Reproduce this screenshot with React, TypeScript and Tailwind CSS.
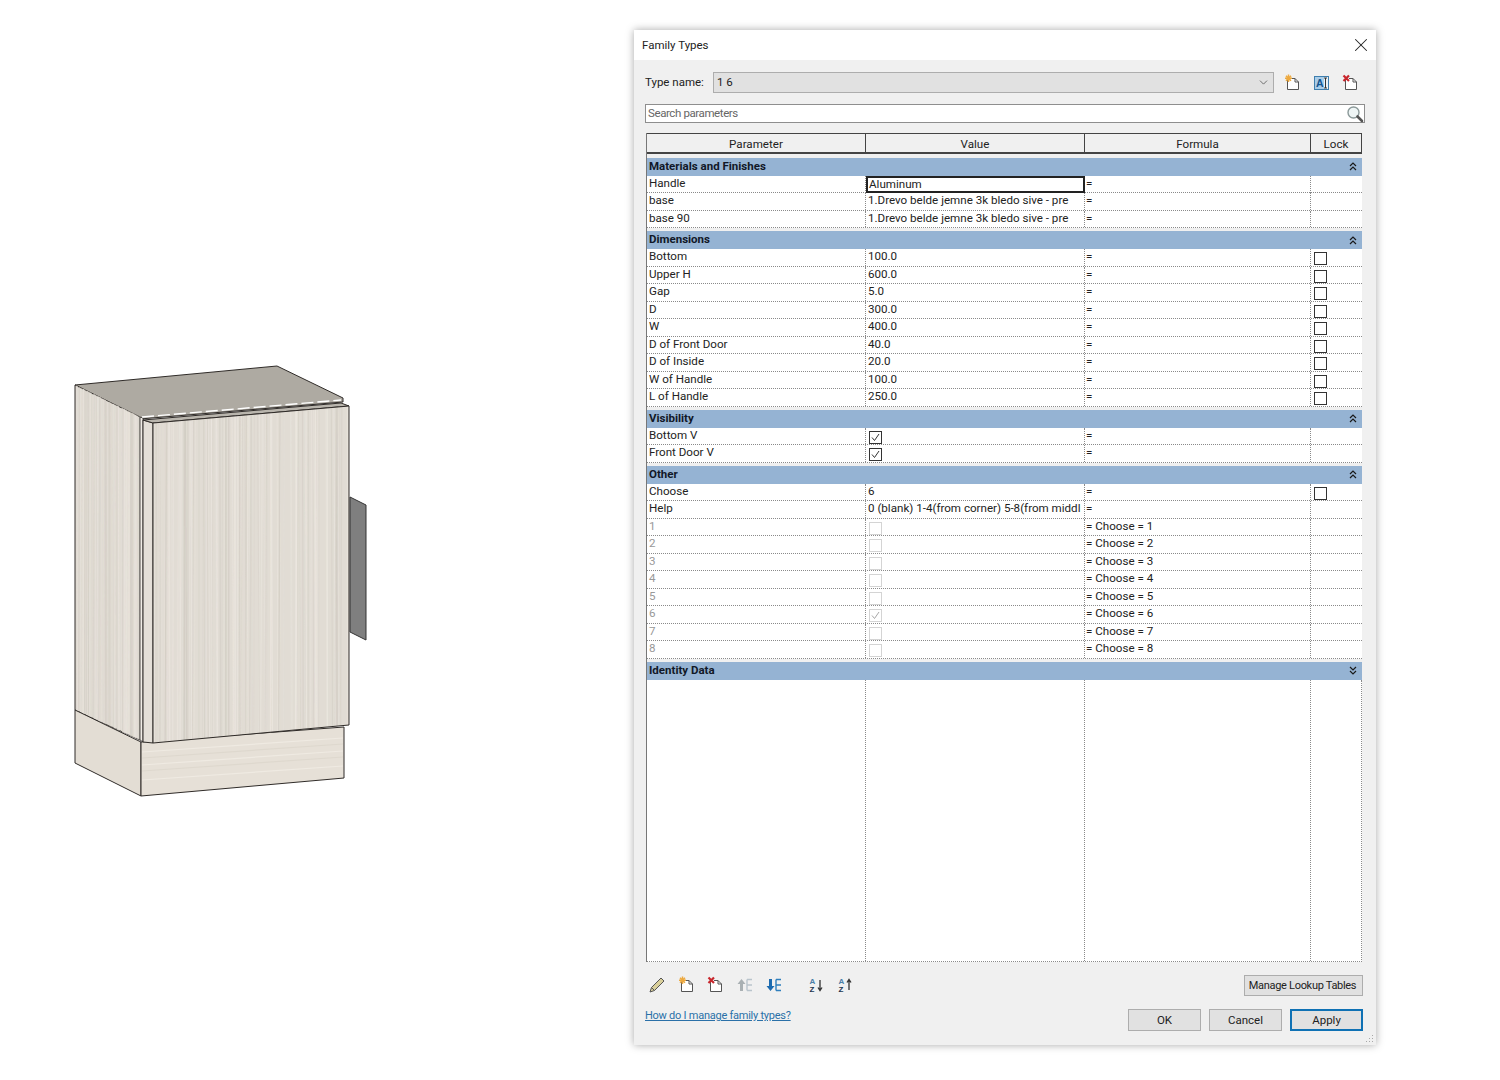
import { X, ChevronDown } from "lucide-react";

type Row = {
  name: string;
  value?: string;
  check?: boolean;
  formula?: string;
  lock?: boolean;
  disabled?: boolean;
  active?: boolean;
};

type Section = { title: string; open: boolean; rows: Row[] };

const sections: Section[] = [
  {
    title: "Materials and Finishes",
    open: true,
    rows: [
      { name: "Handle", value: "Aluminum", active: true },
      { name: "base", value: "1.Drevo belde jemne 3k bledo sive - pre" },
      { name: "base 90", value: "1.Drevo belde jemne 3k bledo sive - pre" },
    ],
  },
  {
    title: "Dimensions",
    open: true,
    rows: [
      { name: "Bottom", value: "100.0", lock: true },
      { name: "Upper H", value: "600.0", lock: true },
      { name: "Gap", value: "5.0", lock: true },
      { name: "D", value: "300.0", lock: true },
      { name: "W", value: "400.0", lock: true },
      { name: "D of Front Door", value: "40.0", lock: true },
      { name: "D of Inside", value: "20.0", lock: true },
      { name: "W of Handle", value: "100.0", lock: true },
      { name: "L of Handle", value: "250.0", lock: true },
    ],
  },
  {
    title: "Visibility",
    open: true,
    rows: [
      { name: "Bottom V", check: true },
      { name: "Front Door V", check: true },
    ],
  },
  {
    title: "Other",
    open: true,
    rows: [
      { name: "Choose", value: "6", lock: true },
      { name: "Help", value: "0 (blank) 1-4(from corner) 5-8(from middl" },
      ...[1, 2, 3, 4, 5, 6, 7, 8].map((n) => ({
        name: String(n),
        check: n === 6,
        formula: `Choose = ${n}`,
        disabled: true,
      })),
    ],
  },
  { title: "Identity Data", open: false, rows: [] },
];

// fixed pseudo random, so the wood grain stays the same every run
const rand = (n: number) => {
  const v = Math.sin(n * 12.9898) * 43758.5453;
  return v - Math.floor(v);
};

const grain = Array.from({ length: 150 }, (_, i) => ({
  id: i,
  x: 150 + rand(i + 1) * 203,
  side: 75 + rand(i + 300) * 66,
  w: 0.3 + rand(i + 600) * 1.1,
  light: rand(i + 900) > 0.4,
  drift: rand(i + 1200) * 4 - 2,
  opacity: 0.35 + rand(i + 1500) * 0.5,
}));

function Cabinet() {
  return (
    <svg viewBox="0 0 634 1080" className="h-[1080px] w-[634px]">
      <defs>
        <clipPath id="sideClip">
          <polygon points="75,385 140,417 140,740 75,710" />
        </clipPath>
        <clipPath id="doorClip">
          <polygon points="153,423 349,406 349,725 153,743" />
        </clipPath>
      </defs>
      {/* top */}
      <polygon points="75,385 277,366 343,398 343,402 140,419" fill="#aeaaa2" stroke="#2f2b28" strokeWidth="1" />
      {/* handle */}
      <polygon points="350,497 366,505 366,640 350,632" fill="#7f7f7f" stroke="#333" strokeWidth="1" />
      {/* side */}
      <polygon points="75,385 140,417 140,740 75,710" fill="#e0dbd3" stroke="#2f2b28" strokeWidth="1" />
      <g clipPath="url(#sideClip)">
        {grain.map((g) => (
          <line key={g.id} x1={g.side} x2={g.side + g.drift / 2} y1="380" y2="745" stroke={g.light ? "#e8e3dc" : "#d5d0c7"} strokeWidth={g.w} opacity={g.opacity} />
        ))}
      </g>
      {/* base */}
      <polygon points="75,710 141,742 141,796 75,763" fill="#e3ddd4" stroke="#2f2b28" strokeWidth="1" />
      <polygon points="141,742 344,727 344,778 141,796" fill="#e6e0d7" stroke="#2f2b28" strokeWidth="1" />
      {[752, 758, 765, 771, 780].map((y, i) => (
        <line key={y} x1="142" x2="343" y1={y} y2={y - 14} stroke={i % 2 ? "#ded8ce" : "#efeae2"} strokeWidth="1.2" />
      ))}
      {/* door edge and strips */}
      <polygon points="140,417 143,418 143,742 140,740" fill="#f0ece6" stroke="#2f2b28" strokeWidth="0.8" />
      <polygon points="143,420 153,423 153,743 143,742" fill="#e4dfd8" stroke="#2f2b28" strokeWidth="1" />
      <line x1="142" y1="417" x2="341" y2="400" stroke="#fff" strokeWidth="1.4" strokeDasharray="12 4" />
      <polygon points="143,420 341,403 349,406 153,423" fill="#b9b5ad" stroke="#2f2b28" strokeWidth="1" />
      {/* door front */}
      <polygon points="153,423 349,406 349,725 153,743" fill="#e1dcd4" />
      <g clipPath="url(#doorClip)">
        {grain.map((g) => (
          <line key={g.id} x1={g.x} x2={g.x + g.drift} y1="400" y2="745" stroke={g.light ? "#ebe6df" : "#d2cdc4"} strokeWidth={g.w} opacity={g.opacity} />
        ))}
      </g>
      <polygon points="153,423 349,406 349,725 153,743" fill="none" stroke="#2f2b28" strokeWidth="1" />
    </svg>
  );
}

function DocIcon({ mark }: { mark: "new" | "del" }) {
  return (
    <svg viewBox="0 0 16 17" className="h-[17px] w-4">
      <path d="M3.5 6V15.5H14.5V8L11 4.5H7" fill="#fff" stroke="#555" strokeWidth="1" />
      <path d="M11 4.5V8H14.5" fill="none" stroke="#555" strokeWidth="1" />
      {mark === "new" ? (
        <g stroke="#eda93f" strokeWidth="1.5">
          <path d="M4.5 0.5V8M1 4.2H8M2 1.7L7 6.7M7 1.7L2 6.7" />
        </g>
      ) : (
        <path d="M1.5 1.5L7 7M7 1.5L1.5 7" stroke="#c8272d" strokeWidth="2.2" />
      )}
    </svg>
  );
}

function RenameIcon() {
  return (
    <svg viewBox="0 0 15 14" className="h-[14px] w-[15px]">
      <rect x="0.5" y="0.5" width="14" height="13" fill="#a9cde9" stroke="#3f7fae" />
      <rect x="10" y="1" width="4" height="12" fill="#eaf2f8" />
      <text x="2" y="11" fontFamily="Liberation Sans, sans-serif" fontSize="10.5" fontWeight="700" fill="#12548f">A</text>
      <path d="M10 2H13M11.5 2V12M10 12H13" stroke="#333" strokeWidth="1" fill="none" />
    </svg>
  );
}

function SearchIcon() {
  return (
    <svg viewBox="0 0 18 18" className="h-[18px] w-[18px]">
      <circle cx="7.5" cy="7.5" r="5.5" fill="#eef5f5" stroke="#8b9999" strokeWidth="1.4" />
      <path d="M11.5 11.5L16 16" stroke="#555" strokeWidth="2.6" strokeLinecap="round" />
    </svg>
  );
}

function Pencil() {
  return (
    <svg viewBox="0 0 16 16" className="h-4 w-4">
      <path d="M1 15L2.5 10.5L12 1L15 4L5.5 13.5Z" fill="#d9cf9a" stroke="#555" strokeWidth="1" />
      <path d="M2.5 10.5L5.5 13.5" stroke="#555" strokeWidth="1" />
    </svg>
  );
}

function MoveIcon({ up, faded }: { up: boolean; faded?: boolean }) {
  const arrow = faded ? "#a9b0b3" : "#1c6bb0";
  const lines = faded ? "#b9c4cc" : "#2f7fbd";
  return (
    <svg viewBox="0 0 16 14" className="h-[14px] w-4">
      <path d={up ? "M4.5 1L8.5 6H6V13H3V6H0.5Z" : "M4.5 13L8.5 8H6V1H3V8H0.5Z"} fill={arrow} />
      <path d="M10 1.5H15M10 1.5V12.5M10 7H15M10 12.5H15" stroke={lines} strokeWidth="1.4" fill="none" />
    </svg>
  );
}

function SortIcon({ up }: { up: boolean }) {
  return (
    <svg viewBox="0 0 14 15" className="h-[15px] w-[14px]">
      <text x="0.5" y="6.5" fontFamily="Liberation Sans, sans-serif" fontSize="8" fontWeight="700" fill="#4a7ea8">A</text>
      <text x="0.5" y="14.5" fontFamily="Liberation Sans, sans-serif" fontSize="8" fontWeight="700" fill="#1c3550">Z</text>
      <path d={up ? "M11 13V3M9 5.5L11 2.5L13 5.5" : "M11 3V13M9 10.5L11 13.5L13 10.5"} stroke="#333" strokeWidth="1.3" fill="none" />
    </svg>
  );
}

function DoubleChevron({ open }: { open: boolean }) {
  return (
    <svg viewBox="0 0 8 9" className="h-[9px] w-2">
      <path
        d={open ? "M1 4L4 1L7 4M1 8L4 5L7 8" : "M1 1L4 4L7 1M1 5L4 8L7 5"}
        fill="none"
        stroke="#1a1a1a"
        strokeWidth="1.2"
      />
    </svg>
  );
}

function CheckBox({ checked, disabled }: { checked?: boolean; disabled?: boolean }) {
  return (
    <span
      className={`mt-[3px] flex h-[13px] w-[13px] shrink-0 items-center justify-center border bg-white ${
        disabled ? "border-[#d4d4d4]" : "border-[#333333]"
      }`}
    >
      {checked && (
        <svg viewBox="0 0 11 11" className="h-[11px] w-[11px]">
          <path d="M2 5.5L4.5 8.5L9 2" fill="none" stroke={disabled ? "#a8a8a8" : "#333"} strokeWidth="1" />
        </svg>
      )}
    </span>
  );
}

function ParamRow({ row }: { row: Row }) {
  const textColor = row.disabled ? "text-[#999999]" : "text-[#222222]";
  return (
    <div className="grid h-[17.5px] grid-cols-[219px_219px_226px_1fr] border-b border-dotted border-[#8a8a8a] bg-white text-[11.6px] leading-[15px]">
      <div className={`border-r border-dotted border-[#8a8a8a] pl-[2px] ${textColor}`}>{row.name}</div>
      <div
        className={`whitespace-nowrap text-[#222222] ${
          row.active
            ? "h-[17px] border-2 border-[#222222] pl-[1px] leading-[13px]"
            : `border-r border-dotted border-[#8a8a8a] ${row.check !== undefined ? "pl-[3px]" : "pl-[2px]"}`
        }`}
      >
        {row.check !== undefined ? <CheckBox checked={row.check} disabled={row.disabled} /> : row.value}
      </div>
      <div className="border-r border-dotted border-[#8a8a8a] pl-[1px] whitespace-nowrap text-[#222222]">
        {row.formula ? `= ${row.formula}` : "="}
      </div>
      <div className="pl-[3px]">{row.lock && <CheckBox />}</div>
    </div>
  );
}

function SectionBlock({ section }: { section: Section }) {
  return (
    <div className="mt-[3px]">
      <div className="flex h-[18px] items-center justify-between bg-[#95b3d3] pr-[5px] pl-[2px] text-[11.5px] font-bold text-[#111827]">
        <span>{section.title}</span>
        <DoubleChevron open={section.open} />
      </div>
      {section.rows.map((row) => (
        <ParamRow key={row.name} row={row} />
      ))}
    </div>
  );
}

function DialogButton({ label, primary, width }: { label: string; primary?: boolean; width: string }) {
  return (
    <button
      className={`h-[22px] ${width} border bg-[#e1e1e1] pt-[1px] text-[11.5px] text-[#222222] ${
        primary ? "border-2 border-[#0f71b4]" : "border-[#adadad]"
      }`}
    >
      {label}
    </button>
  );
}

export default function App() {
  return (
    <div className="flex min-h-[1080px] w-[1500px] bg-white font-['Roboto','Noto_Sans',sans-serif]">
      <Cabinet />

      <div className="relative mt-[30px] flex h-[1015px] w-[742px] flex-col bg-[#f0f0f0] shadow-[0_0_8px_rgba(0,0,0,0.35)]">
        <div className="flex h-[30px] items-center justify-between bg-white pr-[4px] pl-[8px] text-[11.5px] text-[#222222]">
          <span className="pt-[1px]">Family Types</span>
          <X className="h-[22px] w-[22px] text-[#222222]" strokeWidth={1.1} />
        </div>

        <div className="mt-[12px] flex h-[21px] items-center pl-[11px] text-[11.5px] text-[#222222]">
          <span className="w-[68px]">Type name:</span>
          <div className="flex h-[21px] w-[561px] items-center justify-between border border-[#adadad] bg-[#e1e1e1] pr-[3px] pl-[3px]">
            <span>1 6</span>
            <ChevronDown className="h-[13px] w-[13px] text-[#555555]" strokeWidth={1.5} />
          </div>
          <div className="ml-[10px] flex w-[76px] items-center justify-between pr-[2px]">
            <DocIcon mark="new" />
            <RenameIcon />
            <DocIcon mark="del" />
          </div>
        </div>

        <div className="mt-[11px] ml-[11px] flex h-[19px] w-[720px] items-center justify-between border border-[#8e8e8e] bg-white pl-[2px] text-[11.5px] tracking-[-0.4px] text-[#666666]">
          <span>Search parameters</span>
          <SearchIcon />
        </div>

        <div className="mt-[10px] ml-[12px] flex h-[829px] w-[716px] flex-col border-l border-[#777777]">
          <div className="grid h-[21px] shrink-0 grid-cols-[219px_219px_226px_1fr] border-t border-r border-b-2 border-[#444444] bg-[#f0f0f0] text-center text-[11.6px] leading-[20px] text-[#222222]">
            <div className="border-r border-[#444444]">Parameter</div>
            <div className="border-r border-[#444444]">Value</div>
            <div className="border-r border-[#444444]">Formula</div>
            <div>Lock</div>
          </div>
          <div className="h-[0.5px] shrink-0" />
          {sections.map((section) => (
            <SectionBlock key={section.title} section={section} />
          ))}
          <div className="grid flex-1 grid-cols-[219px_219px_226px_1fr] border-r border-b border-dotted border-[#8a8a8a] bg-white">
            <div className="border-r border-dotted border-[#8a8a8a]" />
            <div className="border-r border-dotted border-[#8a8a8a]" />
            <div className="border-r border-dotted border-[#8a8a8a]" />
            <div />
          </div>
        </div>

        <div className="mt-[13px] flex h-[21px] items-center justify-between pr-[13px] pl-[15px]">
          <div className="-mt-[2px] flex items-center">
            <Pencil />
            <span className="ml-[13px]"><DocIcon mark="new" /></span>
            <span className="ml-[13px]"><DocIcon mark="del" /></span>
            <span className="ml-[14px]"><MoveIcon up faded /></span>
            <span className="ml-[13px]"><MoveIcon up={false} /></span>
            <span className="ml-[27px]"><SortIcon up={false} /></span>
            <span className="ml-[15px]"><SortIcon up /></span>
          </div>
          <button className="h-[21px] w-[119px] border border-[#adadad] bg-[#e1e1e1] pt-[1px] pr-[2px] text-[11px] tracking-[-0.3px] whitespace-nowrap text-[#222222]">
            Manage Lookup Tables
          </button>
        </div>

        <div className="mt-[13px] flex items-start justify-between pr-[13px] pl-[11px]">
          <a className="text-[11px] leading-[13px] tracking-[-0.25px] text-[#2a70a8] underline">How do I manage family types?</a>
          <div className="flex gap-[8px]">
            <DialogButton label="OK" width="w-[73px]" />
            <DialogButton label="Cancel" width="w-[73px]" />
            <DialogButton label="Apply" primary width="w-[73px]" />
          </div>
        </div>

        <svg viewBox="0 0 8 8" className="absolute right-[2px] bottom-[2px] h-2 w-2">
          <path d="M6 0h1v1H6zM3 3h1v1H3zM6 3h1v1H6zM0 6h1v1H0zM3 6h1v1H3zM6 6h1v1H6z" fill="#a8a8a8" />
        </svg>
      </div>
    </div>
  );
}
